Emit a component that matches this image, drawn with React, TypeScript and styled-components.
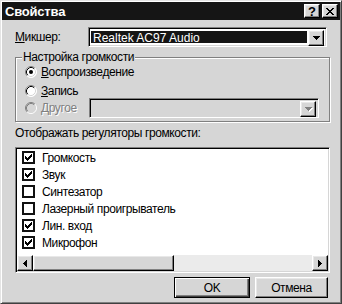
import React from 'react';
import styled, { createGlobalStyle } from 'styled-components';

const BG = '#d6d6d6';
const DARK = '#151515';

const Global = createGlobalStyle`
  html, body { margin: 0; padding: 0; background: ${BG}; }
  body { font-family: "Liberation Sans", Arial, sans-serif; font-size: 12px; letter-spacing: -0.4px; color: #000; }
  * { box-sizing: border-box; }
`;

const Window = styled.div`
  width: 342px;
  height: 304px;
  background: ${BG};
  border: 1px solid;
  border-color: #e4e4e4 #404040 #404040 #e4e4e4;
  box-shadow: inset 1px 1px 0 #fff, inset -1px -1px 0 #808080;
  padding: 1px;
  display: flex;
  flex-direction: column;
`;

const TitleBar = styled.div`
  height: 18px;
  background: ${DARK};
  display: flex;
  align-items: center;
  padding: 0 2px 0 3px;
`;

const Title = styled.div`
  flex: 1;
  color: #fff;
  font-weight: bold;
  font-size: 13px;
  letter-spacing: -0.2px;
`;

const CapButtons = styled.div`
  display: flex;
  gap: 2px;
`;

const Raised = `
  background: ${BG};
  border: 1px solid;
  border-color: #fff #000 #000 #fff;
  box-shadow: inset -1px -1px 0 #808080, inset 1px 1px 0 #e8e8e8;
`;

const CapButton = styled.div`
  ${Raised}
  width: 16px;
  height: 14px;
  display: flex;
  align-items: center;
  justify-content: center;
  font-weight: bold;
  font-size: 13px;
  line-height: 12px;
  padding-top: 1px;
  letter-spacing: 0;
`;

const Body = styled.div`
  flex: 1;
  display: flex;
  flex-direction: column;
  padding: 7px 10px 0 13px;
`;

const MixerRow = styled.div`
  display: flex;
  align-items: center;
  height: 20px;
`;

const FieldLabel = styled.div`
  width: 73px;
`;

const Field = styled.div<{ $width: number; $disabled?: boolean }>`
  width: ${(p) => p.$width}px;
  height: 20px;
  display: flex;
  padding: 2px;
  background: ${(p) => (p.$disabled ? BG : '#fff')};
  border: 1px solid;
  border-color: #808080 #fff #fff #808080;
  box-shadow: inset 1px 1px 0 #000, inset -1px -1px 0 ${BG};
`;

const Selection = styled.div`
  flex: 1;
  margin: 1px 1px 1px 0;
  background: ${DARK};
  color: #fff;
  padding-left: 2px;
  line-height: 14px;
  letter-spacing: 0;
`;

const Spacer = styled.div`
  flex: 1;
`;

const DropButton = styled.div`
  ${Raised}
  width: 16px;
  height: 16px;
  display: flex;
  align-items: center;
  justify-content: center;
`;

const Group = styled.div`
  position: relative;
  margin-top: 10px;
  width: 315px;
  border: 1px solid #808080;
  box-shadow: 1px 1px 0 #fff, inset 1px 1px 0 #fff;
  padding: 6px 10px 3px 9px;
  display: flex;
  flex-direction: column;
`;

const Legend = styled.span`
  position: absolute;
  top: -8px;
  left: 6px;
  padding: 0 1px;
  background: ${BG};
  line-height: 14px;
`;

const OptionRow = styled.div<{ $h: number; $mb?: number }>`
  height: ${(p) => p.$h}px;
  margin-bottom: ${(p) => p.$mb ?? 0}px;
  display: flex;
  align-items: center;
  gap: 4px;
`;

const DisabledText = styled.span`
  color: #808080;
  text-shadow: 1px 1px 0 #fff;
`;

const Caption = styled.div`
  margin-top: 4px;
  line-height: 14px;
`;

const List = styled.div`
  margin-top: 7px;
  width: 315px;
  height: 126px;
  background: #fff;
  border: 1px solid;
  border-color: #808080 #fff #fff #808080;
  box-shadow: inset 1px 1px 0 #000, inset -1px -1px 0 ${BG};
  padding: 1px;
  display: flex;
  flex-direction: column;
`;

const Items = styled.div`
  flex: 1;
  padding-left: 5px;
`;

const Item = styled.div`
  height: 17px;
  display: flex;
  align-items: center;
  gap: 7px;
`;

const Check = styled.span`
  width: 13px;
  height: 13px;
  background: #fff;
  border: 2px solid #111;
  display: flex;
  align-items: center;
  justify-content: center;
`;

const HScroll = styled.div`
  height: 16px;
  display: flex;
  background: #ebebeb;
`;

const ScrollBtn = styled.div`
  ${Raised}
  width: 16px;
  height: 16px;
  display: flex;
  align-items: center;
  justify-content: center;
`;

const Thumb = styled.div<{ $w: number }>`
  ${Raised}
  width: ${(p) => p.$w}px;
  height: 16px;
`;

const ButtonRow = styled.div`
  margin-top: 4px;
  display: flex;
  justify-content: flex-end;
  gap: 5px;
  padding-right: 2px;
`;

const PushButton = styled.div<{ $w: number; $default?: boolean }>`
  width: ${(p) => p.$w}px;
  height: 21px;
  display: flex;
  align-items: center;
  justify-content: center;
  background: ${BG};
  border: 1px solid;
  border-color: ${(p) => (p.$default ? '#000' : '#fff #000 #000 #fff')};
  box-shadow: ${(p) =>
    p.$default
      ? 'inset 1px 1px 0 #fff, inset -1px -1px 0 #404040, inset -2px -2px 0 #808080'
      : 'inset -1px -1px 0 #808080, inset 1px 1px 0 #e8e8e8'};
`;

const Key = styled.u`
  text-decoration: underline;
  text-underline-offset: 1px;
`;

const Pixels = ({ rows, color }: { rows: string[]; color: string }) => (
  <svg width={rows[0].length} height={rows.length} viewBox={`0 0 ${rows[0].length} ${rows.length}`} shapeRendering="crispEdges">
    {rows.flatMap((r, y) =>
      r.split('').map((c, x) => (c === 'x' ? <rect key={`${x}-${y}`} x={x} y={y} width={1} height={1} fill={color} /> : null))
    )}
  </svg>
);

const CLOSE = ['xx....xx', '.xx..xx.', '..xxxx..', '...xx...', '..xxxx..', '.xx..xx.', 'xx....xx'];
const DOWN = ['xxxxxxx', '.xxxxx.', '..xxx..', '...x...'];
const LEFT = ['...x', '..xx', '.xxx', 'xxxx', '.xxx', '..xx', '...x'];
const RIGHT = ['x...', 'xx..', 'xxx.', 'xxxx', 'xxx.', 'xx..', 'x...'];
const TICK = ['......x', '.....xx', 'x...xxx', 'xx.xxx.', 'xxxxx..', '.xxx...', '..x....'];

const DownArrow = ({ disabled }: { disabled?: boolean }) =>
  disabled ? (
    <span style={{ filter: 'drop-shadow(1px 1px 0 #fff)', display: 'flex' }}>
      <Pixels rows={DOWN} color="#808080" />
    </span>
  ) : (
    <Pixels rows={DOWN} color="#000" />
  );

const Radio = ({ checked, disabled }: { checked?: boolean; disabled?: boolean }) => (
  <svg width="12" height="12" viewBox="0 0 12 12">
    <circle cx="6" cy="6" r="5.5" fill={disabled ? BG : '#fff'} />
    <path d="M2.11 9.89 A5.5 5.5 0 0 1 9.89 2.11" fill="none" stroke="#808080" strokeWidth="1" />
    <path d="M9.89 2.11 A5.5 5.5 0 0 1 2.11 9.89" fill="none" stroke="#fff" strokeWidth="1" />
    <path d="M2.82 9.18 A4.5 4.5 0 0 1 9.18 2.82" fill="none" stroke={disabled ? '#808080' : '#000'} strokeWidth="1" />
    <path d="M9.18 2.82 A4.5 4.5 0 0 1 2.82 9.18" fill="none" stroke={BG} strokeWidth="1" />
    {checked && <circle cx="6" cy="6" r="2" fill="#000" />}
  </svg>
);

const items: [string, boolean][] = [
  ['Громкость', true],
  ['Звук', true],
  ['Синтезатор', false],
  ['Лазерный проигрыватель', false],
  ['Лин. вход', true],
  ['Микрофон', true],
];

export default function App() {
  return (
    <>
      <Global />
      <Window>
        <TitleBar>
          <Title>Свойства</Title>
          <CapButtons>
            <CapButton>?</CapButton>
            <CapButton>
              <Pixels rows={CLOSE} color="#000" />
            </CapButton>
          </CapButtons>
        </TitleBar>
        <Body>
          <MixerRow>
            <FieldLabel>
              <Key>М</Key>икшер:
            </FieldLabel>
            <Field $width={239}>
              <Selection>Realtek AC97 Audio</Selection>
              <DropButton>
                <DownArrow />
              </DropButton>
            </Field>
          </MixerRow>
          <Group>
            <Legend>Настройка громкости</Legend>
            <OptionRow $h={16} $mb={3}>
              <Radio checked />
              <span>
                <Key>В</Key>оспроизведение
              </span>
            </OptionRow>
            <OptionRow $h={15}>
              <Radio />
              <span>
                <Key>З</Key>апись
              </span>
            </OptionRow>
            <OptionRow $h={20}>
              <Radio disabled />
              <DisabledText>
                <Key>Д</Key>ругое
              </DisabledText>
              <Spacer />
              <Field $width={230} $disabled>
                <Spacer />
                <DropButton>
                  <DownArrow disabled />
                </DropButton>
              </Field>
            </OptionRow>
          </Group>
          <Caption>Отображать регуляторы громкости:</Caption>
          <List>
            <Items>
              {items.map(([label, on]) => (
                <Item key={label}>
                  <Check>{on && <Pixels rows={TICK} color="#000" />}</Check>
                  <span>{label}</span>
                </Item>
              ))}
            </Items>
            <HScroll>
              <ScrollBtn>
                <Pixels rows={LEFT} color="#000" />
              </ScrollBtn>
              <Thumb $w={141} />
              <Spacer />
              <ScrollBtn>
                <Pixels rows={RIGHT} color="#000" />
              </ScrollBtn>
            </HScroll>
          </List>
          <ButtonRow>
            <PushButton $w={76} $default>
              OK
            </PushButton>
            <PushButton $w={73}>Отмена</PushButton>
          </ButtonRow>
        </Body>
      </Window>
    </>
  );
}
